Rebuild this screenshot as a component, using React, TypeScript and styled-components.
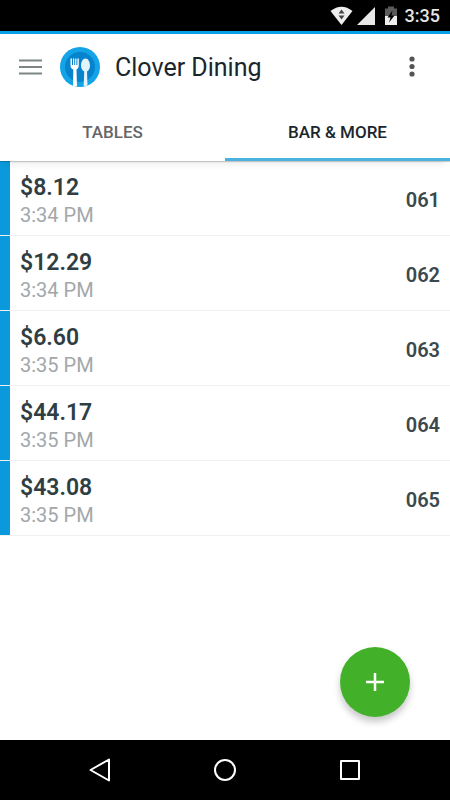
import React, { useState } from "react";
import styled, { createGlobalStyle } from "styled-components";

const GlobalStyle = createGlobalStyle`
  *, *::before, *::after { box-sizing: border-box; }
  body {
    margin: 0;
    background: #fff;
    font-family: Roboto, "Liberation Sans", sans-serif;
  }
  button {
    border: 0;
    margin: 0;
    padding: 0;
    background: none;
    color: inherit;
    font: inherit;
    cursor: pointer;
  }
  svg { display: block; }
`;

const Screen = styled.div`
  display: flex;
  flex-direction: column;
  min-height: 100vh;
`;

const StatusBar = styled.div`
  display: flex;
  align-items: center;
  justify-content: flex-end;
  height: 34px;
  padding-right: 10px;
  background: #000;
  border-bottom: 3px solid #08a1e8;
  color: #e6e6e6;
  font-size: 18px;
  font-weight: 500;
`;

const StatusIcons = styled.div`
  display: flex;
  align-items: center;
  margin-right: 7px;
`;

const AppBar = styled.header`
  display: flex;
  align-items: center;
  height: 66px;
  padding: 0 20px 0 19px;
`;

const MenuButton = styled.button`
  width: 23px;
  height: 40px;
  display: grid;
  place-items: center;
`;

const Logo = styled.svg`
  margin-left: 18px;
`;

const Title = styled.h1`
  flex: 1;
  margin: 0 0 0 15px;
  padding-top: 2px;
  color: #1b262c;
  font-size: 25px;
  line-height: 32px;
  font-weight: 400;
`;

const MoreButton = styled.button`
  width: 36px;
  height: 40px;
  display: grid;
  place-items: center;
`;

const Tabs = styled.div`
  display: grid;
  grid-template-columns: 1fr 1fr;
  height: 61px;
  position: relative;
  box-shadow: 0 1px 1px rgba(0, 0, 0, 0.18), 0 8px 8px -6px rgba(0, 0, 0, 0.1);
`;

const Tab = styled.button<{ $active: boolean }>`
  border-bottom: 3px solid ${(p) => (p.$active ? "#4bb1df" : "transparent")};
  padding-top: 6px;
  color: ${(p) => (p.$active ? "#1b262c" : "#666")};
  font-size: 17px;
  font-weight: 500;
`;

const Orders = styled.ul`
  flex: 1;
  margin: 0;
  padding: 0;
  list-style: none;
`;

const Order = styled.li`
  display: flex;
  align-items: center;
  height: 75px;
  padding-right: 10px;
  border-bottom: 1px solid #f0f0f0;
`;

const Stripe = styled.span`
  align-self: stretch;
  width: 10px;
  margin-right: 10px;
  background: #0a9adc;
`;

const Details = styled.div`
  flex: 1;
  padding-top: 6px;
`;

const Amount = styled.div`
  color: #2f3e43;
  font-size: 23px;
  line-height: 28px;
  font-weight: 600;
`;

const Time = styled.div`
  color: #a3a7a9;
  font-size: 20px;
  line-height: 26px;
`;

const OrderNumber = styled.span`
  padding-top: 4px;
  color: #3b494d;
  font-size: 20px;
  line-height: 28px;
  font-weight: 600;
`;

const AddButton = styled.button`
  position: fixed;
  right: 40px;
  bottom: 83px;
  width: 70px;
  height: 70px;
  border-radius: 50%;
  display: grid;
  place-items: center;
  background: #43b02a;
  box-shadow: 0 5px 7px rgba(0, 0, 0, 0.22);
`;

const NavBar = styled.nav`
  display: flex;
  align-items: center;
  justify-content: center;
  gap: 101px;
  height: 60px;
  background: #000;
`;

const NavButton = styled.button`
  width: 24px;
  height: 24px;
`;

const orders = [
  { amount: "$8.12", time: "3:34 PM", number: "061" },
  { amount: "$12.29", time: "3:34 PM", number: "062" },
  { amount: "$6.60", time: "3:35 PM", number: "063" },
  { amount: "$44.17", time: "3:35 PM", number: "064" },
  { amount: "$43.08", time: "3:35 PM", number: "065" },
];

const tabs = ["TABLES", "BAR & MORE"];

const DeviceIcons = () => (
  <svg width="68" height="20" viewBox="0 0 68 20" aria-hidden="true">
    <path d="M0.500 5Q11.500 -3.500 22.500 5L11.500 19Z" fill="#eee" />
    <path d="M11.500 3.500L14.500 7.500H8.500ZM8.500 9.500H14.500L11.500 13.500Z" fill="#444" />
    <path d="M27 19L45 1V19Z" fill="#e8e8e8" />
    <path d="M58 0.500H64V2.500H67V10.500H55V2.500H58Z" fill="#5a5a5a" />
    <path d="M55 10H67V19H55Z" fill="#eee" />
    <path d="M62.500 4.500L57.500 11.500H60.500L59 16.500L64.500 9.500H61.500Z" fill="#000" />
  </svg>
);

export default function App() {
  const [selected, setSelected] = useState(1);
  return (
    <>
      <GlobalStyle />
      <Screen>
        <StatusBar>
          <StatusIcons>
            <DeviceIcons />
          </StatusIcons>
          <span>3:35</span>
        </StatusBar>
        <AppBar>
          <MenuButton aria-label="Menu">
            <svg width="23" height="16" viewBox="0 0 23 16">
              <path d="M0 1.500H23M0 8H23M0 14.500H23" stroke="#7d8587" strokeWidth="2" />
            </svg>
          </MenuButton>
          <Logo width="40" height="40" viewBox="0 0 40 40" aria-hidden="true">
            <circle cx="20" cy="20" r="20" fill="#12a4e6" />
            <circle cx="20" cy="20" r="15" fill="#0783cd" />
            <path
              d="M10.500 11.500H12V18H13V11.500H14.200V18H15.200V11.500H16.400V18H17.400V11.500H18.800V18.500Q18.800 21.500 16.500 22.500L17 39.700L13 38.700L13.300 22.500Q10.500 21.500 10.500 18.500Z"
              fill="#fff"
            />
            <path
              d="M25.500 11.500C28.200 11.500 30 15 30 18.500C30 21.500 28.800 23.500 27 24.500L27.500 38.500L23.700 39.600L24.200 24.500C22.300 23.500 21 21.500 21 18.500C21 15 22.800 11.500 25.500 11.500Z"
              fill="#e3f3fa"
            />
          </Logo>
          <Title>Clover Dining</Title>
          <MoreButton aria-label="More options">
            <svg width="6" height="22" viewBox="0 0 6 22" fill="#555">
              <circle cx="3" cy="3" r="2.600" />
              <circle cx="3" cy="10.500" r="2.600" />
              <circle cx="3" cy="18" r="2.600" />
            </svg>
          </MoreButton>
        </AppBar>
        <Tabs role="tablist">
          {tabs.map((label, i) => (
            <Tab
              key={label}
              role="tab"
              aria-selected={selected === i}
              $active={selected === i}
              onClick={() => setSelected(i)}
            >
              {label}
            </Tab>
          ))}
        </Tabs>
        <Orders>
          {orders.map((order) => (
            <Order key={order.number}>
              <Stripe />
              <Details>
                <Amount>{order.amount}</Amount>
                <Time>{order.time}</Time>
              </Details>
              <OrderNumber>{order.number}</OrderNumber>
            </Order>
          ))}
        </Orders>
        <AddButton aria-label="Add order">
          <svg width="18" height="18" viewBox="0 0 18 18">
            <path d="M0 9H18M9 0V18" stroke="#fff" strokeWidth="2.500" />
          </svg>
        </AddButton>
        <NavBar>
          <NavButton aria-label="Back">
            <svg width="24" height="24" viewBox="0 0 24 24" fill="none" stroke="#fff" strokeWidth="2" strokeLinejoin="round">
              <path d="M2.500 12L21 1.500V22.500Z" />
            </svg>
          </NavButton>
          <NavButton aria-label="Home">
            <svg width="24" height="24" viewBox="0 0 24 24" fill="none" stroke="#fff" strokeWidth="2">
              <circle cx="12" cy="12" r="10" />
            </svg>
          </NavButton>
          <NavButton aria-label="Recent apps">
            <svg width="24" height="24" viewBox="0 0 24 24" fill="none" stroke="#fff" strokeWidth="2" strokeLinejoin="round">
              <rect x="3" y="3" width="18" height="18" />
            </svg>
          </NavButton>
        </NavBar>
      </Screen>
    </>
  );
}
